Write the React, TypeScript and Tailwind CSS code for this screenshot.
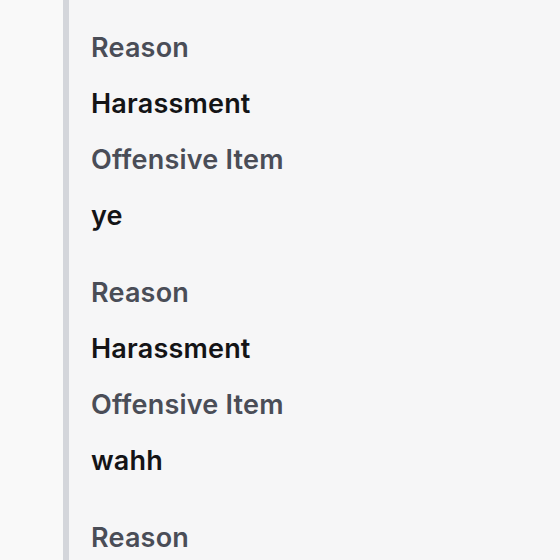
const reports = [
  { reason: 'Harassment', item: 'ye' },
  { reason: 'Harassment', item: 'wahh' },
  { reason: 'Harassment', item: 'ok' },
]

function ReportBlock({ reason, item }: { reason: string; item: string }) {
  return (
    <div className="flex flex-col">
      <div className="h-[56px] flex items-center text-[#4a4d57]">Reason</div>
      <div className="h-[56px] flex items-center text-[#141416]">{reason}</div>
      <div className="h-[56px] flex items-center text-[#4a4d57]">Offensive Item</div>
      <div className="h-[56px] flex items-center text-[#141416]">{item}</div>
    </div>
  )
}

export default function App() {
  return (
    <div className="w-[560px] h-[560px] overflow-hidden flex bg-[#f8f8f9]">
      <div className="w-[63px] shrink-0 bg-[#f9f9f9]" />
      <div className="w-[6px] shrink-0 bg-[#d4d6db]" />
      <div
        className="flex-1 bg-[#f6f6f7] pl-[22px] pt-[19px] flex flex-col gap-[21px] text-[27px] tracking-[0.2px] font-semibold leading-none"
        style={{ fontFamily: 'Inter, "Open Sans", sans-serif' }}
      >
        {reports.map((r, i) => (
          <ReportBlock key={i} reason={r.reason} item={r.item} />
        ))}
      </div>
    </div>
  )
}
